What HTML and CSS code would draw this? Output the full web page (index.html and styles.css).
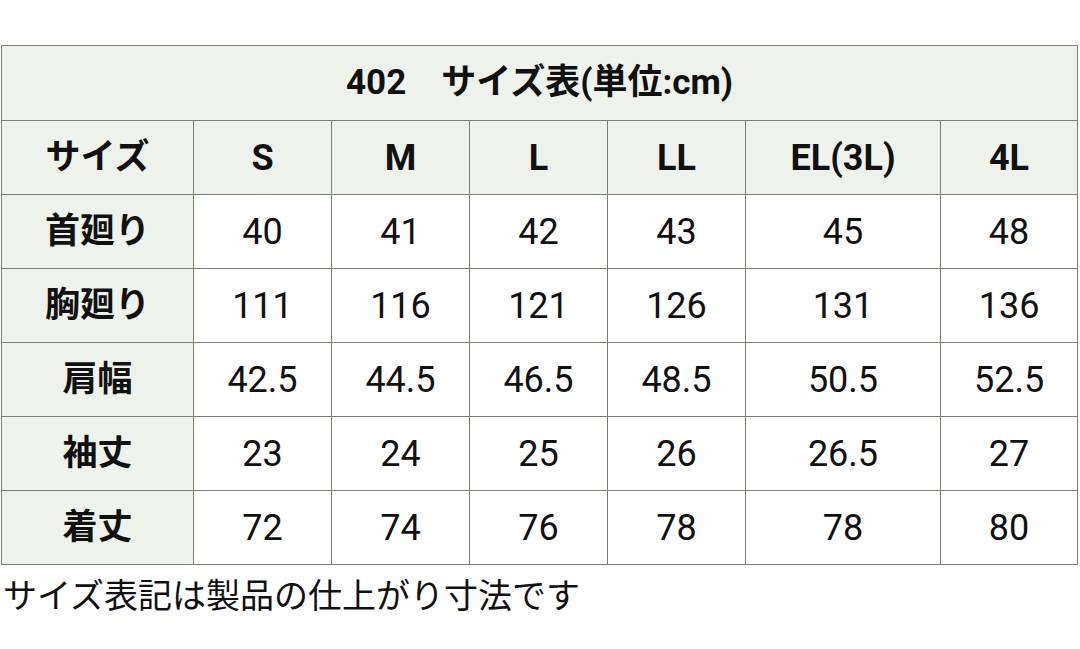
FILE: index.html
```html
<!DOCTYPE html>
<html lang="ja">
<head>
<meta charset="utf-8">
<link rel="stylesheet" href="styles.css">
</head>
<body>
<table class="size-table">
  <colgroup>
    <col class="c0"><col class="c1"><col class="c1"><col class="c1"><col class="c1"><col class="c5"><col class="c6">
  </colgroup>
  <tr class="title-row"><th colspan="7">402　サイズ表(単位:cm)</th></tr>
  <tr class="head-row">
    <th class="label">サイズ</th><th>S</th><th>M</th><th>L</th><th>LL</th><th>EL(3L)</th><th>4L</th>
  </tr>
  <tr><th class="label">首廻り</th><td>40</td><td>41</td><td>42</td><td>43</td><td>45</td><td>48</td></tr>
  <tr><th class="label">胸廻り</th><td>111</td><td>116</td><td>121</td><td>126</td><td>131</td><td>136</td></tr>
  <tr><th class="label">肩幅</th><td>42.5</td><td>44.5</td><td>46.5</td><td>48.5</td><td>50.5</td><td>52.5</td></tr>
  <tr><th class="label">袖丈</th><td>23</td><td>24</td><td>25</td><td>26</td><td>26.5</td><td>27</td></tr>
  <tr><th class="label">着丈</th><td>72</td><td>74</td><td>76</td><td>78</td><td>78</td><td>80</td></tr>
</table>
<p class="note">サイズ表記は製品の仕上がり寸法です</p>
</body>
</html>
```
FILE: styles.css
```css
html, body {
  margin: 0;
  padding: 0;
  background: #ffffff;
}
body {
  font-family: Roboto, "Noto Sans CJK JP", sans-serif;
  color: #111111;
  padding-top: 45px;
  padding-left: 1px;
}
.size-table {
  border-collapse: collapse;
  table-layout: fixed;
  width: 1077px;
}
.size-table th,
.size-table td {
  border: 1px solid #75836f;
  padding: 0;
  text-align: center;
  vertical-align: middle;
  font-size: 36px;
  line-height: 40px;
  height: 74px;
  box-sizing: border-box;
}
.size-table th {
  background: #edf2eb;
  font-weight: 700;
}
.size-table th.label {
  font-size: 35px;
}
.size-table td {
  background: #ffffff;
  font-weight: 400;
}
.title-row th {
  height: 75px;
  font-size: 35px;
}
.c0 { width: 192px; }
.c1 { width: 138px; }
.c5 { width: 195px; }
.c6 { width: 137px; }
.note {
  margin: 0;
  padding-left: 2px;
  font-size: 34px;
  line-height: 62px;
  font-weight: 400;
  color: #111111;
}
```
